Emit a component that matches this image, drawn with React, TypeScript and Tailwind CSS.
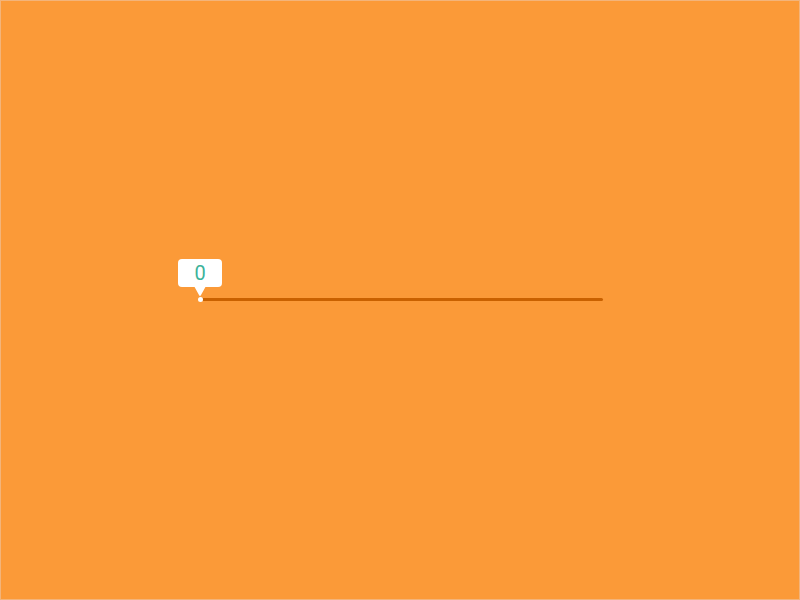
import React from "react";

export default function App() {
  return (
    <div
      className="w-[800px] h-[600px] bg-[#fb9a38] border border-[#f3b47a] pt-[297px] pl-[199px]"
      style={{ fontFamily: "Roboto, 'Noto Sans', sans-serif" }}
    >
      <div className="relative w-[403px] h-[3px] rounded-full bg-[#c96100]">
        <div className="absolute left-[-2px] top-[-1px] w-[5px] h-[5px] rounded-full bg-white" />
        <div className="absolute left-[-22px] top-[-39px] w-[44px] h-[28px] rounded-[4px] bg-white flex items-center justify-center text-[20px] leading-none text-[#3cb39a]">
          0
        </div>
        <svg
          className="absolute left-[-6px] top-[-12px]"
          width="12"
          height="11"
          viewBox="0 0 12 11"
        >
          <path d="M0 0 H12 L7 9 Q6 11 5 9 Z" fill="#ffffff" />
        </svg>
      </div>
    </div>
  );
}
